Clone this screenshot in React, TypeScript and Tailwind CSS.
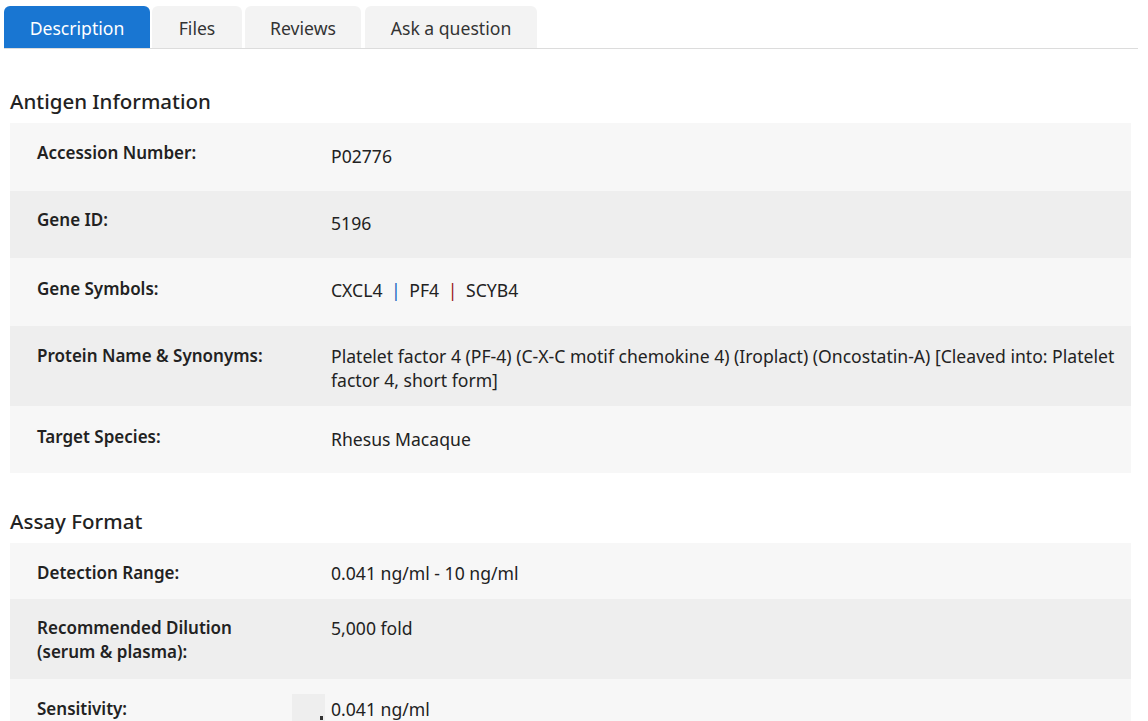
import React from "react";

type Row = { label: React.ReactNode; value: React.ReactNode; h: number; lp: number; vp: number };

const Table = ({ rows }: { rows: Row[] }) => (
  <div className="ml-[10px] w-[1121px]">
    {rows.map((r, i) => (
      <div
        key={i}
        className={`flex ${i % 2 === 0 ? "bg-[#f7f7f7]" : "bg-[#eeeeee]"}`}
        style={{ height: r.h }}
      >
        <div className="w-[321px] shrink-0 pl-[27px] font-semibold text-[17px] leading-[24px] text-[#222]" style={{ paddingTop: r.lp }}>
          {r.label}
        </div>
        <div className="flex-1 pr-[8px] text-[17.6px] leading-[24px] text-[#222]" style={{ paddingTop: r.vp }}>
          {r.value}
        </div>
      </div>
    ))}
  </div>
);

export default function App() {
  const tabs = [
    { t: "Description", w: 146, active: true, ml: 4 },
    { t: "Files", w: 90, ml: 2 },
    { t: "Reviews", w: 116, ml: 3 },
    { t: "Ask a question", w: 172, ml: 4 },
  ];
  const antigen: Row[] = [
    { label: "Accession Number:", value: "P02776", h: 68, lp: 18, vp: 21 },
    { label: "Gene ID:", value: "5196", h: 67, lp: 17, vp: 20 },
    {
      label: "Gene Symbols:",
      value: (
        <span>
          CXCL4 <span className="mx-[4px] text-[#1565c0]">|</span> PF4{" "}
          <span className="mx-[4px] text-[#9a1a1a]">|</span> SCYB4
        </span>
      ),
      h: 68,
      lp: 19,
      vp: 20,
    },
    {
      label: "Protein Name & Synonyms:",
      value:
        "Platelet factor 4 (PF-4) (C-X-C motif chemokine 4) (Iroplact) (Oncostatin-A) [Cleaved into: Platelet factor 4, short form]",
      h: 80,
      lp: 18,
      vp: 18,
    },
    { label: "Target Species:", value: "Rhesus Macaque", h: 67, lp: 19, vp: 21 },
  ];
  const assay: Row[] = [
    { label: "Detection Range:", value: "0.041 ng/ml - 10 ng/ml", h: 56, lp: 18, vp: 18 },
    {
      label: (
        <>
          Recommended Dilution
          <br />
          (serum &amp; plasma):
        </>
      ),
      value: "5,000 fold",
      h: 80,
      lp: 17,
      vp: 17,
    },
    {
      label: "Sensitivity:",
      value: (
        <span className="relative">
          <span className="absolute left-[-39px] top-[-3px] h-[30px] w-[33px] bg-[#eeeeee]" />
          <span className="absolute left-[-11px] top-[19px] h-[4px] w-[3px] bg-[#333]" />
          0.041 ng/ml
        </span>
      ),
      h: 60,
      lp: 18,
      vp: 18,
    },
  ];
  return (
    <div className="h-[721px] w-[1148px] overflow-hidden bg-white" style={{ fontFamily: '"Noto Sans", "Open Sans", sans-serif' }}>
      <div className="flex pt-[6px]">
        {tabs.map((t) => (
          <div
            key={t.t}
            className={`flex h-[42px] items-center justify-center rounded-t-[6px] pt-[2px] text-[17.6px] ${
              t.active ? "bg-[#1976d2] text-white" : "bg-[#f3f3f3] text-[#333]"
            }`}
            style={{ width: t.w, marginLeft: t.ml }}
          >
            {t.t}
          </div>
        ))}
      </div>
      <div className="ml-[4px] h-px w-[1134px] bg-[#dcdcdc]" />
      <h2 className="ml-[10px] mt-[38px] text-[20.5px] font-medium leading-[28px] text-[#222]">Antigen Information</h2>
      <div className="h-[8px]" />
      <Table rows={antigen} />
      <h2 className="ml-[10px] mt-[34px] text-[20.5px] font-medium leading-[28px] text-[#222]">Assay Format</h2>
      <div className="h-[8px]" />
      <Table rows={assay} />
    </div>
  );
}
